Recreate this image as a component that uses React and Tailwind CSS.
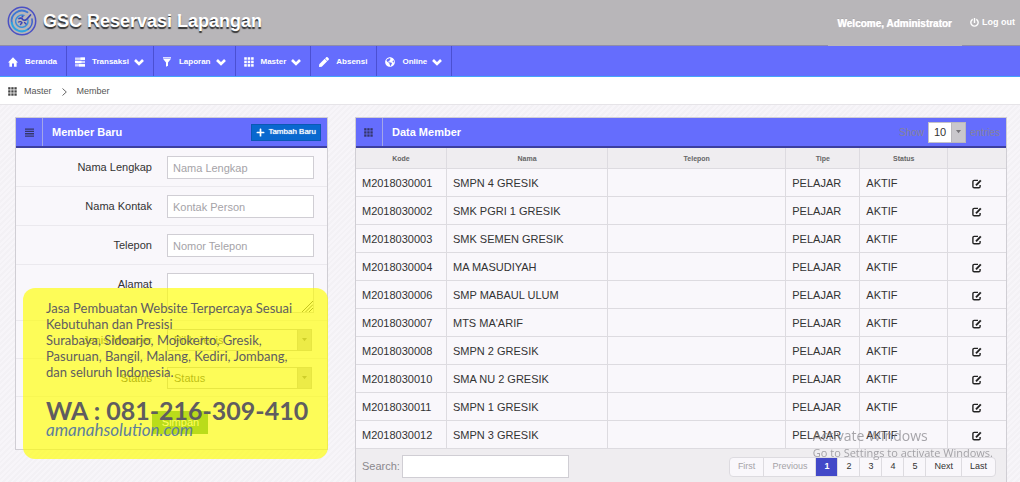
import { useState } from 'react';
import { FaGlobeAmericas, FaPen, FaPlus, FaPowerOff } from 'react-icons/fa';

const members = [
  { kode: 'M2018030001', nama: 'SMPN 4 GRESIK' },
  { kode: 'M2018030002', nama: 'SMK PGRI 1 GRESIK' },
  { kode: 'M2018030003', nama: 'SMK SEMEN GRESIK' },
  { kode: 'M2018030004', nama: 'MA MASUDIYAH' },
  { kode: 'M2018030006', nama: 'SMP MABAUL ULUM' },
  { kode: 'M2018030007', nama: "MTS MA'ARIF" },
  { kode: 'M2018030008', nama: 'SMPN 2 GRESIK' },
  { kode: 'M2018030010', nama: 'SMA NU 2 GRESIK' },
  { kode: 'M2018030011', nama: 'SMPN 1 GRESIK' },
  { kode: 'M2018030012', nama: 'SMPN 3 GRESIK' },
];

const GridIcon = ({ className }) => (
  <svg viewBox="0 0 9 9" className={className} fill="currentColor">
    {[0.2, 3.3, 6.4].map((y) => [0.2, 3.3, 6.4].map((x) => <rect key={`${x}-${y}`} x={x} y={y} width="2.3" height="2.3" />))}
  </svg>
);

const ListIcon = ({ className }) => (
  <svg viewBox="0 0 9 9" className={className} fill="currentColor">
    <path d="M0 .5h9v1.300H0zM0 2.800h9v1.300H0zM0 5.100h9v1.300H0zM0 7.400h9v1.300H0z" />
  </svg>
);

const TasksIcon = ({ className }) => (
  <svg viewBox="0 0 10 10" className={className} fill="currentColor">
    <rect y="0.5" width="10" height="2.4" opacity="0.7" />
    <rect x="5.5" y="0.5" width="4.5" height="2.4" />
    <rect y="3.8" width="10" height="2.4" opacity="0.7" />
    <rect y="3.8" width="6.5" height="2.4" />
    <rect y="7.1" width="10" height="2.4" opacity="0.7" />
    <rect x="4" y="7.1" width="6" height="2.4" />
  </svg>
);

const HomeIcon = ({ className }) => (
  <svg viewBox="0 0 10 10" className={className} fill="currentColor">
    <path d="M5 .3 10 5.500H8.600V9.700H6V6.500H4v3.200H1.400V5.500H0z" />
  </svg>
);

const FilterIcon = ({ className }) => (
  <svg viewBox="0 0 10 10" className={className} fill="currentColor">
    <path d="M1 .3h8v1.200H1zM1.200 2h7.600L6 5.500v3.200L4 9.800V5.500z" />
  </svg>
);

const ChevronIcon = () => (
  <svg viewBox="0 0 10 8" className="h-2 w-[10px]" fill="none" stroke="currentColor" strokeWidth="2.6">
    <path d="M1 2l4 4 4-4" />
  </svg>
);

const EditIcon = () => (
  <svg viewBox="0 0 10 10" className="size-[10px]" fill="none" stroke="currentColor" strokeWidth="1.4">
    <path d="M6 1.400H2.200Q.9 1.400.9 2.700v4.800q0 1.300 1.300 1.300h4.600q1.300 0 1.300-1.300V6" />
    <path d="M4 6.400 8.800 1.400" strokeWidth="1.9" />
  </svg>
);

const Logo = () => (
  <svg viewBox="0 0 30 30" className="size-[30px]" fill="none" strokeLinecap="round">
    <circle cx="15" cy="15" r="13.7" stroke="#4a50c4" strokeWidth="1.5" />
    <path d="M20.500 6.300A10.300 10.300 0 0 0 4.800 17" stroke="#3d78d4" strokeWidth="1.8" />
    <path d="M4.800 17A10.300 10.300 0 0 0 21 23.300" stroke="#2fa3e0" strokeWidth="2" />
    <path d="M21 23.300A10.300 10.300 0 0 0 25 13" stroke="#3d62cc" strokeWidth="1.5" />
    <path d="M17 9.300A6.500 6.500 0 0 0 8.700 16.500c.6 3 3.600 5 6.800 4.700 3.800-.4 6-3.700 5.500-7.200" stroke="#3a8fda" strokeWidth="1.4" />
    <path d="M12 12.500c1.500-.8 3-.5 3.500.8s2.500 1.200 4 .2l4-4.500" stroke="#3a45b8" strokeWidth="1.700" />
    <path d="M11.500 16c1.500-.8 3-.3 3.500.8l-1.500 1.700M17.500 16.500l1.500 1.500" stroke="#3a45b8" strokeWidth="1.400" />
    <circle cx="15.500" cy="10.500" r="1" fill="#3a45b8" />
  </svg>
);

const ArrowBox = () => (
  <span className="pointer-events-none absolute inset-y-0 right-0 flex w-[15px] items-center justify-center border border-[#b9b7bc] bg-[#c9c7cc] text-[#77757a]">
    <svg viewBox="0 0 6 4" className="w-[5px]" fill="currentColor"><path d="M0 0h6L3 4z" /></svg>
  </span>
);

const navItems = [
  { label: 'Beranda', icon: HomeIcon },
  { label: 'Transaksi', icon: TasksIcon, menu: true },
  { label: 'Laporan', icon: FilterIcon, menu: true },
  { label: 'Master', icon: GridIcon, menu: true },
  { label: 'Absensi', icon: FaPen },
  { label: 'Online', icon: FaGlobeAmericas, menu: true },
];

const PanelHeader = ({ icon: Icon, title, children }) => (
  <div className="flex h-[30px] items-center border-b-2 border-[#3c3fa0] bg-[#656dfd] pr-1.5">
    <span className="flex h-full w-[27px] items-center justify-center border-r border-[#a3a6e8] text-[#34366a]">
      <Icon className="size-[9px]" />
    </span>
    <h2 className="flex-1 pl-[9px] text-[11px] font-bold text-white">{title}</h2>
    {children}
  </div>
);

const FormRow = ({ id, label, children }) => (
  <div className="grid grid-cols-[136fr_147fr] gap-[15px] border-b border-[#ebe9ee] pt-2 pr-[13px] pb-[7px]">
    <label htmlFor={id} className="pt-[3px] text-right leading-4">{label}</label>
    {children}
  </div>
);

const TextField = ({ id, label, placeholder }) => (
  <FormRow id={id} label={label}>
    <input
      id={id}
      type="text"
      placeholder={placeholder}
      className="h-[23px] w-full border border-[#d0ced4] bg-white px-[5px] outline-none placeholder:text-[#a5a3a8]"
    />
  </FormRow>
);

const SelectField = ({ id, label, placeholder }) => (
  <FormRow id={id} label={label}>
    <div className="relative mr-0.5 h-[22px]">
      <select id={id} className="h-full w-full appearance-none border border-[#bdbbc0] bg-[#f9f7fb] px-1.5 text-[#444] outline-none">
        <option>{placeholder}</option>
      </select>
      <ArrowBox />
    </div>
  </FormRow>
);

const pages = ['First', 'Previous', '1', '2', '3', '4', '5', 'Next', 'Last'];

const App = () => {
  const [page, setPage] = useState('1');
  const [search, setSearch] = useState('');

  return (
    <div className="min-h-screen bg-[#f5f3f7] bg-[repeating-linear-gradient(135deg,#f7f5f9_0_2px,#f3f1f5_2px_4px)] font-['Liberation_Sans',Arial,sans-serif] text-[11px] text-[#333]">
      <header className="flex h-[45px] items-start justify-between bg-[#b8b6b9] pr-[5px] pl-[7px]">
        <div className="flex items-center gap-[6px] pt-[6px]">
          <Logo />
          <h1 className="text-[18px] leading-7 font-bold text-white [text-shadow:0_2px_1px_#333]">GSC Reservasi Lapangan</h1>
        </div>
        <div className="flex items-start gap-2">
          <span className="relative z-10 flex h-[46px] items-center bg-[#b8b6b9] px-[10px] text-[10px] font-bold text-white [text-shadow:0_0_1px_#fff,0_-1px_0_#a5a3a6]">
            Welcome, Administrator
          </span>
          <a href="#logout" className="flex items-center gap-[3px] pt-[14px] text-[9px] leading-4 font-bold text-white">
            <FaPowerOff className="size-[9px]" />
            Log out
          </a>
        </div>
      </header>

      <nav className="flex h-8 border-t border-b border-t-[#8f8da8] border-b-[#45a5fb] bg-[#656dfd]">
        {navItems.map(({ label, icon: Icon, menu }) => (
          <a key={label} href={`#${label}`} className="flex items-center gap-[7px] border-r border-[#4b50d2] pt-0.5 pr-[9px] pl-2 text-[8px] font-bold text-white">
            <Icon className="size-[10px]" />
            <span className="flex items-center gap-[5px]">
              {label}
              {menu && <ChevronIcon />}
            </span>
          </a>
        ))}
      </nav>

      <div className="flex h-7 items-center border-b border-[#e6e4e8] bg-white pt-0.5 pl-2 text-[9px] text-[#555]">
        <GridIcon className="mr-[7px] size-[9px] text-[#444]" />
        <a href="#master">Master</a>
        <svg viewBox="0 0 5 8" className="mx-[10px] h-2 w-[5px]" fill="none" stroke="#666"><path d="M.5.5 4.300 4 .5 7.500" /></svg>
        <a href="#member">Member</a>
      </div>

      <main className="grid grid-cols-[12fr_25fr] items-start gap-[27px] pt-3 pr-[13px] pl-[15px]">
        <section className="relative border border-[#d0ced4] bg-[#f9f7fb]">
          <PanelHeader icon={ListIcon} title="Member Baru">
            <button type="button" className="flex h-[17px] items-center gap-[3px] border border-[#0c58b4] bg-[#0968cf] px-1 text-[8px] text-white [text-shadow:0_0_1px_#fff]">
              <FaPlus className="size-[9px]" />
              Tambah Baru
            </button>
          </PanelHeader>
          <form onSubmit={(e) => e.preventDefault()}>
            <TextField id="nama" label="Nama Lengkap" placeholder="Nama Lengkap" />
            <TextField id="kontak" label="Nama Kontak" placeholder="Kontak Person" />
            <TextField id="telepon" label="Telepon" placeholder="Nomor Telepon" />
            <FormRow id="alamat" label="Alamat">
              <div className="relative h-10">
                <textarea id="alamat" className="block h-full w-full resize-none border border-[#d0ced4] bg-white outline-none" />
                <svg viewBox="0 0 11 11" className="absolute right-px bottom-px size-[11px]" stroke="#444" strokeWidth="0.9">
                  <path d="M0 11 11 0M3.500 11 11 3.500M7 11l4-4" />
                </svg>
              </div>
            </FormRow>
            <SelectField id="jenis" label="Jenis Member" placeholder="Pilih Jenis" />
            <SelectField id="status" label="Status" placeholder="Status" />
            <div className="flex justify-center pt-[14px] pb-[15px] pl-[18px]">
              <button type="submit" className="h-[23px] w-14 bg-[#3a9a4c] text-white">Simpan</button>
            </div>
          </form>

          {/* Promo note laid over the form */}
          <aside className="absolute top-[170px] -right-px left-[7px] h-[171px] rounded-xl bg-[#ffff00]/65 pt-3 pl-[23px] font-['Lato',sans-serif] text-[13px] leading-4 text-[#605d60]">
            <p className="whitespace-nowrap">
              Jasa Pembuatan Website Terpercaya Sesuai
              <br />
              Kebutuhan dan Presisi
              <br />
              Surabaya, Sidoarjo, Mojokerto, Gresik,
              <br />
              Pasuruan, Bangil, Malang, Kediri, Jombang,
              <br />
              dan seluruh Indonesia.
            </p>
            <p className="mt-3.5 text-[25px] leading-8 font-bold whitespace-nowrap">WA : 081-216-309-410</p>
            <a href="#amanahsolution" className="block text-[17px] leading-2 text-[#5f7f9c] italic">amanahsolution.com</a>
          </aside>
        </section>

        <section className="border border-b-0 border-[#d0ced4] bg-[#f9f7fb]">
          <PanelHeader icon={GridIcon} title="Data Member">
            <label htmlFor="length" className="text-[10px] text-[#85839a]">Show</label>
            <span className="relative mx-1 h-[21px] w-[38px]">
              <select id="length" className="h-full w-full appearance-none border border-[#c4c2c8] bg-white pl-[5px] text-[#333] outline-none">
                <option>10</option>
                <option>25</option>
                <option>50</option>
              </select>
              <ArrowBox />
            </span>
            <span className="text-[10px] text-[#85839a]">entries</span>
          </PanelHeader>
          <table className="w-full table-fixed border-separate border-spacing-0">
            <thead>
              <tr className="h-[21px] bg-[#efedf0] text-[7px] text-[#666] [&>th]:border-b [&>th]:border-[#dddbe0] [&>th]:pt-[3px] [&>th:not(:last-child)]:border-r">
                <th className="w-[14%]">Kode</th>
                <th className="w-[24.8%]">Nama</th>
                <th className="w-[27.4%]">Telepon</th>
                <th className="w-[11.4%]">Tipe</th>
                <th className="w-[13.5%]">Status</th>
                <th className="w-[8.9%]" />
              </tr>
            </thead>
            <tbody>
              {members.map((m) => (
                <tr key={m.kode} className="h-7 [&>td]:border-b [&>td]:border-[#dddbe0] [&>td]:px-1.5 [&>td]:pt-0.5 [&>td:not(:last-child)]:border-r">
                  <td>{m.kode}</td>
                  <td>{m.nama}</td>
                  <td />
                  <td>PELAJAR</td>
                  <td>AKTIF</td>
                  <td>
                    <button type="button" aria-label={`Edit ${m.nama}`} className="mx-auto block text-[#222]">
                      <EditIcon />
                    </button>
                  </td>
                </tr>
              ))}
            </tbody>
          </table>
          <div className="flex items-center justify-between bg-[#efedf0] pt-1.5 pr-[10px] pb-1 pl-1.5">
            <div className="flex items-center gap-0.5">
              <label htmlFor="search" className="text-[#8a888d]">Search:</label>
              <input
                id="search"
                type="text"
                value={search}
                onChange={(e) => setSearch(e.target.value)}
                className="h-[23px] w-[167px] border border-[#d0ced4] bg-white px-[5px] outline-none"
              />
            </div>
            <div className="flex h-5 overflow-hidden rounded-sm border border-[#dddbe0] bg-[#f9f7fb] text-[9px]">
              {pages.map((p, i) => (
                <button
                  key={p}
                  type="button"
                  onClick={() => setPage(p)}
                  className={`px-2 not-last:border-r not-last:border-[#dddbe0] ${
                    p === page ? 'bg-[#4248c8] font-bold text-white' : i < 2 ? 'text-[#a5a3a8]' : 'text-[#333]'
                  }`}
                >
                  {p}
                </button>
              ))}
            </div>
          </div>
        </section>
      </main>

      <div className="pointer-events-none fixed right-[27px] bottom-[21px] font-['Open_Sans',sans-serif] text-[#8a888d]/75">
        <p className="text-[14px] leading-[18px]">Activate Windows</p>
        <p className="text-[11px] leading-4">Go to Settings to activate Windows.</p>
      </div>
    </div>
  );
};

export default App;
